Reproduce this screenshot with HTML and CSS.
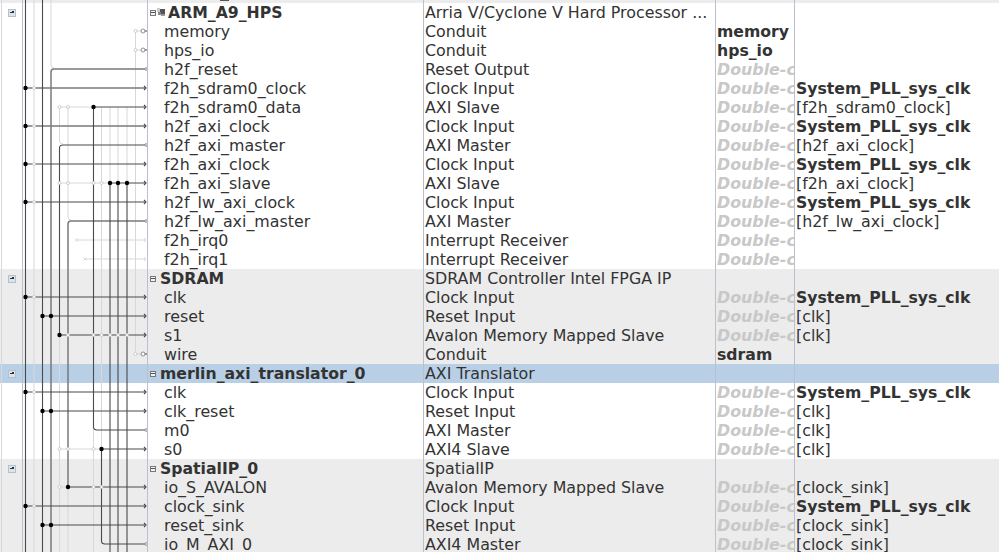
FILE: index.html
```html
<!DOCTYPE html>
<html>
<head>
    <title>System Contents</title>
    <link rel="stylesheet" href="styles.css">
</head>
<body>
    <div class="table">
        <div class="row group cutoff">
            <div class="tick"></div><div class="wires"></div>
            <div class="name"><div class="cutMark"></div></div>
            <div class="kind"></div><div class="export"></div><div class="clock"></div>
        </div>

        <!-- ARM_A9_HPS -->
        <div class="row">
            <div class="tick"><span class="checkbox"></span></div><div class="wires"></div>
            <div class="name title"><span class="toggle"></span><svg class="chip" viewBox="0 0 9 9"><rect x="3" y="1" width="5" height="5" fill="#555"/><rect x="1" y="4" width="3" height="3" fill="#888"/><rect x="4" y="6" width="4" height="2" fill="#999"/><path d="M0 1H3M0 3H3" stroke="#999"/></svg><b class="armName">ARM_A9_HPS</b></div>
            <div class="kind">Arria V/Cyclone V Hard Processor ...</div><div class="export"></div><div class="clock"></div>
        </div>
        <div class="row"><div class="tick"></div><div class="wires"></div><div class="name">memory</div><div class="kind">Conduit</div><div class="export"><b>memory</b></div><div class="clock"></div></div>
        <div class="row"><div class="tick"></div><div class="wires"></div><div class="name">hps_io</div><div class="kind">Conduit</div><div class="export"><b>hps_io</b></div><div class="clock"></div></div>
        <div class="row"><div class="tick"></div><div class="wires"></div><div class="name">h2f_reset</div><div class="kind">Reset Output</div><div class="export hint">Double-c</div><div class="clock"></div></div>
        <div class="row"><div class="tick"></div><div class="wires"></div><div class="name">f2h_sdram0_clock</div><div class="kind">Clock Input</div><div class="export hint">Double-c</div><div class="clock"><b>System_PLL_sys_clk</b></div></div>
        <div class="row"><div class="tick"></div><div class="wires"></div><div class="name">f2h_sdram0_data</div><div class="kind">AXI Slave</div><div class="export hint">Double-c</div><div class="clock">[f2h_sdram0_clock]</div></div>
        <div class="row"><div class="tick"></div><div class="wires"></div><div class="name">h2f_axi_clock</div><div class="kind">Clock Input</div><div class="export hint">Double-c</div><div class="clock"><b>System_PLL_sys_clk</b></div></div>
        <div class="row"><div class="tick"></div><div class="wires"></div><div class="name">h2f_axi_master</div><div class="kind">AXI Master</div><div class="export hint">Double-c</div><div class="clock">[h2f_axi_clock]</div></div>
        <div class="row"><div class="tick"></div><div class="wires"></div><div class="name">f2h_axi_clock</div><div class="kind">Clock Input</div><div class="export hint">Double-c</div><div class="clock"><b>System_PLL_sys_clk</b></div></div>
        <div class="row"><div class="tick"></div><div class="wires"></div><div class="name">f2h_axi_slave</div><div class="kind">AXI Slave</div><div class="export hint">Double-c</div><div class="clock">[f2h_axi_clock]</div></div>
        <div class="row"><div class="tick"></div><div class="wires"></div><div class="name">h2f_lw_axi_clock</div><div class="kind">Clock Input</div><div class="export hint">Double-c</div><div class="clock"><b>System_PLL_sys_clk</b></div></div>
        <div class="row"><div class="tick"></div><div class="wires"></div><div class="name">h2f_lw_axi_master</div><div class="kind">AXI Master</div><div class="export hint">Double-c</div><div class="clock">[h2f_lw_axi_clock]</div></div>
        <div class="row"><div class="tick"></div><div class="wires"></div><div class="name">f2h_irq0</div><div class="kind">Interrupt Receiver</div><div class="export hint">Double-c</div><div class="clock"></div></div>
        <div class="row"><div class="tick"></div><div class="wires"></div><div class="name">f2h_irq1</div><div class="kind">Interrupt Receiver</div><div class="export hint">Double-c</div><div class="clock"></div></div>

        <!-- SDRAM -->
        <div class="row group">
            <div class="tick"><span class="checkbox"></span></div><div class="wires"></div>
            <div class="name title"><span class="toggle"></span><b>SDRAM</b></div>
            <div class="kind">SDRAM Controller Intel FPGA IP</div><div class="export"></div><div class="clock"></div>
        </div>
        <div class="row group"><div class="tick"></div><div class="wires"></div><div class="name">clk</div><div class="kind">Clock Input</div><div class="export hint">Double-c</div><div class="clock"><b>System_PLL_sys_clk</b></div></div>
        <div class="row group"><div class="tick"></div><div class="wires"></div><div class="name">reset</div><div class="kind">Reset Input</div><div class="export hint">Double-c</div><div class="clock">[clk]</div></div>
        <div class="row group"><div class="tick"></div><div class="wires"></div><div class="name">s1</div><div class="kind">Avalon Memory Mapped Slave</div><div class="export hint">Double-c</div><div class="clock">[clk]</div></div>
        <div class="row group"><div class="tick"></div><div class="wires"></div><div class="name">wire</div><div class="kind">Conduit</div><div class="export"><b>sdram</b></div><div class="clock"></div></div>

        <!-- merlin_axi_translator_0 -->
        <div class="row selected">
            <div class="tick"><span class="checkbox"></span></div><div class="wires"></div>
            <div class="name title"><span class="toggle"></span><b>merlin_axi_translator_0</b></div>
            <div class="kind">AXI Translator</div><div class="export"></div><div class="clock"></div>
        </div>
        <div class="row"><div class="tick"></div><div class="wires"></div><div class="name">clk</div><div class="kind">Clock Input</div><div class="export hint">Double-c</div><div class="clock"><b>System_PLL_sys_clk</b></div></div>
        <div class="row"><div class="tick"></div><div class="wires"></div><div class="name">clk_reset</div><div class="kind">Reset Input</div><div class="export hint">Double-c</div><div class="clock">[clk]</div></div>
        <div class="row"><div class="tick"></div><div class="wires"></div><div class="name">m0</div><div class="kind">AXI Master</div><div class="export hint">Double-c</div><div class="clock">[clk]</div></div>
        <div class="row"><div class="tick"></div><div class="wires"></div><div class="name">s0</div><div class="kind">AXI4 Slave</div><div class="export hint">Double-c</div><div class="clock">[clk]</div></div>

        <!-- SpatialIP_0 -->
        <div class="row group">
            <div class="tick"><span class="checkbox"></span></div><div class="wires"></div>
            <div class="name title"><span class="toggle"></span><b>SpatialIP_0</b></div>
            <div class="kind">SpatialIP</div><div class="export"></div><div class="clock"></div>
        </div>
        <div class="row group"><div class="tick"></div><div class="wires"></div><div class="name">io_S_AVALON</div><div class="kind">Avalon Memory Mapped Slave</div><div class="export hint">Double-c</div><div class="clock">[clock_sink]</div></div>
        <div class="row group"><div class="tick"></div><div class="wires"></div><div class="name">clock_sink</div><div class="kind">Clock Input</div><div class="export hint">Double-c</div><div class="clock"><b>System_PLL_sys_clk</b></div></div>
        <div class="row group"><div class="tick"></div><div class="wires"></div><div class="name">reset_sink</div><div class="kind">Reset Input</div><div class="export hint">Double-c</div><div class="clock">[clock_sink]</div></div>
        <div class="row group"><div class="tick"></div><div class="wires"></div><div class="name">io_M_AXI_0</div><div class="kind">AXI4 Master</div><div class="export hint">Double-c</div><div class="clock">[clock_sink]</div></div>

        <!-- connection diagram, drawn over the wires column -->
        <svg class="diagram" width="147" height="552" viewBox="0 0 147 552">
            <g class="off">
                <path d="M34 0V552"/>
                <path d="M51 0V65Q51 68 54 68"/>
                <path d="M59.5 107V141Q59.5 144 63 144"/>
                <path d="M59.5 335V552"/>
                <path d="M68 107V217Q68 220 71 220"/>
                <path d="M68 487V552"/>
                <path d="M93.5 430V552"/>
                <path d="M101.5 107V449"/>
                <path d="M110 107V183M118 107V183M127 107V183"/>
                <path d="M135.5 31V354"/>
                <path d="M59.5 107H93M59.5 183H110M59.5 449H101M59.5 487H68"/>
                <path d="M135.5 31H141M135.5 50H141M135.5 354H141"/>
                <path d="M76.5 240H145M85 259H145"/>
                <path d="M75 238.5L78 241.5M78 238.5L75 241.5M83.5 257.5L86.5 260.5M86.5 257.5L83.5 260.5"/>
                <path d="M144 238L146 240L144 242M144 257L146 259L144 261"/>
            </g>
            <g class="mid">
                <path d="M51 552V72Q51 69 54 69H145"/>
                <path d="M68 487V224Q68 221 71 221H145"/>
                <path d="M25.5 88H145M25.5 126H145"/>
            </g>
            <g class="on">
                <path d="M25.5 0V552M42.5 0V552"/>
                <path d="M59.5 335V148Q59.5 145 63 145H145"/>
                <path d="M93.5 107V427Q93.5 430 97 430H145"/>
                <path d="M101.5 449V541Q101.5 544 105 544H145"/>
                <path d="M110 183V552M118 183V552M127 183V552"/>
                <path d="M93.5 107H145M110 183H145M59.5 335H145M101.5 449H145M68 487H145"/>
                <path d="M25.5 164H145M25.5 202H145M25.5 297H145M25.5 392H145M25.5 506H145"/>
                <path d="M42.5 316H145M42.5 411H145M42.5 525H145"/>
                <path d="M141 31H147M141 50H147M141 354H147"/>
                <path d="M144 86L146 88L144 90M144 105L146 107L144 109M144 124L146 126L144 128M144 162L146 164L144 166M144 181L146 183L144 185M144 200L146 202L144 204M144 295L146 297L144 299M144 314L146 316L144 318M144 333L146 335L144 337M144 390L146 392L144 394M144 409L146 411L144 413M144 447L146 449L144 451M144 485L146 487L144 489M144 504L146 506L144 508M144 523L146 525L144 527"/>
            </g>
            <!-- open ends of the conduits and the outputs -->
            <g class="port">
                <circle cx="143" cy="31" r="2"/><circle cx="143" cy="50" r="2"/><circle cx="143" cy="354" r="2"/>
                <circle cx="146" cy="69" r="1.3"/><circle cx="146" cy="145" r="1.3"/><circle cx="146" cy="221" r="1.3"/><circle cx="146" cy="430" r="1.3"/><circle cx="146" cy="544" r="1.3"/>
            </g>
            <!-- connections that are not made -->
            <g class="hop">
                <circle cx="135.5" cy="31" r="1.5"/><circle cx="135.5" cy="50" r="1.5"/><circle cx="135.5" cy="354" r="1.5"/>
                <circle cx="34" cy="88" r="1.5"/><circle cx="34" cy="126" r="1.5"/><circle cx="34" cy="164" r="1.5"/><circle cx="34" cy="202" r="1.5"/><circle cx="34" cy="297" r="1.5"/><circle cx="34" cy="392" r="1.5"/><circle cx="34" cy="506" r="1.5"/>
                <circle cx="59.5" cy="107" r="1.5"/><circle cx="68" cy="107" r="1.5"/>
                <circle cx="59.5" cy="183" r="1.5"/><circle cx="68" cy="183" r="1.5"/><circle cx="93.5" cy="183" r="1.5"/><circle cx="101.5" cy="183" r="1.5"/>
                <circle cx="68" cy="335" r="1.5"/><circle cx="93.5" cy="335" r="1.5"/><circle cx="101.5" cy="335" r="1.5"/><circle cx="110" cy="335" r="1.5"/><circle cx="118" cy="335" r="1.5"/><circle cx="127" cy="335" r="1.5"/>
                <circle cx="59.5" cy="449" r="1.5"/><circle cx="68" cy="449" r="1.5"/><circle cx="93.5" cy="449" r="1.5"/>
                <circle cx="59.5" cy="487" r="1.5"/><circle cx="93.5" cy="487" r="1.5"/><circle cx="101.5" cy="487" r="1.5"/>
            </g>
            <g class="dot">
                <circle cx="25.5" cy="88" r="2.2"/><circle cx="25.5" cy="126" r="2.2"/><circle cx="25.5" cy="164" r="2.2"/><circle cx="25.5" cy="202" r="2.2"/><circle cx="25.5" cy="297" r="2.2"/><circle cx="25.5" cy="392" r="2.2"/><circle cx="25.5" cy="506" r="2.2"/>
                <circle cx="42.5" cy="316" r="2.2"/><circle cx="51" cy="316" r="2.2"/><circle cx="42.5" cy="411" r="2.2"/><circle cx="51" cy="411" r="2.2"/><circle cx="42.5" cy="525" r="2.2"/><circle cx="51" cy="525" r="2.2"/>
                <circle cx="93.5" cy="107" r="2.2"/>
                <circle cx="110" cy="183" r="2.2"/><circle cx="118" cy="183" r="2.2"/><circle cx="127" cy="183" r="2.2"/>
                <circle cx="59.5" cy="335" r="2.2"/><circle cx="101.5" cy="449" r="2.2"/><circle cx="68" cy="487" r="2.2"/>
            </g>
        </svg>
    </div>
</body>
</html>
```

FILE: styles.css
```css
body {
    margin: 0;
    padding: 0;
    background-color: #fff;
    color: #333;
    font-family: "DejaVu Sans", sans-serif;
    font-size: 15.85px;
    overflow: hidden;
}

b {
    font-size: 15.7px;
}

.table {
    position: relative;
    height: 552px;
    overflow: hidden;
}

.row {
    display: grid;
    grid-template-columns: 23px 125px 276px 292px 79px 1fr;
    height: 19px;
    line-height: 19px;
    white-space: nowrap;
}

.cutoff {
    height: 3px;
    overflow: hidden;
}

.cutMark {
    width: 9px;
    height: 1px;
    margin-left: 56px;
    background-color: #555;
}

.group {
    background-color: #ececec;
}

.selected {
    background-color: #b8cfe6;
}

.tick, .wires, .name, .kind, .export {
    border-right: 1px solid #b9c2cc;
    overflow-x: clip;
}

.tick {
    display: flex;
    align-items: center;
    justify-content: center;
    margin-left: 1px;
    border-left: 1px solid #d5d9dd;
}

.checkbox {
    display: block;
    position: relative;
    width: 6px;
    height: 6px;
    border: 1px solid #b4c0ce;
    background-color: #dbe4ee;
}

.checkbox::after {
    content: "";
    position: absolute;
    left: 1px;
    top: 1px;
    width: 2px;
    height: 1px;
    border-right: 2px solid #333;
    border-bottom: 1px solid #333;
}

.name {
    padding-left: 16px;
}

.name.title {
    display: flex;
    align-items: center;
    padding-left: 2px;
}

.name.title b {
    margin-left: 4px;
}

.name.title .armName {
    margin-left: 2px;
}

.toggle {
    display: block;
    position: relative;
    flex: none;
    box-sizing: border-box;
    width: 6px;
    height: 6px;
    border: 1px solid #777;
    background-color: #f4f4f4;
}

.toggle::after {
    content: "";
    position: absolute;
    left: 0;
    top: 1px;
    width: 4px;
    height: 1px;
    background-color: #555;
}

.chip {
    flex: none;
    width: 9px;
    height: 9px;
    margin-left: 1px;
}

.kind {
    padding-left: 1px;
}

.export {
    padding-left: 1px;
}

.clock {
    padding-left: 1px;
    overflow-x: clip;
}

.hint {
    color: #c8c8c8;
    font-weight: bold;
    font-style: italic;
}

.diagram {
    position: absolute;
    left: 0;
    top: 0;
    fill: none;
}

.off path {
    stroke: #d8d8d8;
    stroke-width: 1;
}

.mid path {
    stroke: #7a7a7a;
    stroke-width: 1.5;
}

.on path {
    stroke: #4a4a4a;
    stroke-width: 1.1;
}

.port circle {
    fill: #fff;
    stroke: #777;
    stroke-width: 0.8;
}

.hop circle {
    fill: #fff;
    stroke: #c4c4c4;
    stroke-width: 0.8;
}

.dot circle {
    fill: #000;
}
```
